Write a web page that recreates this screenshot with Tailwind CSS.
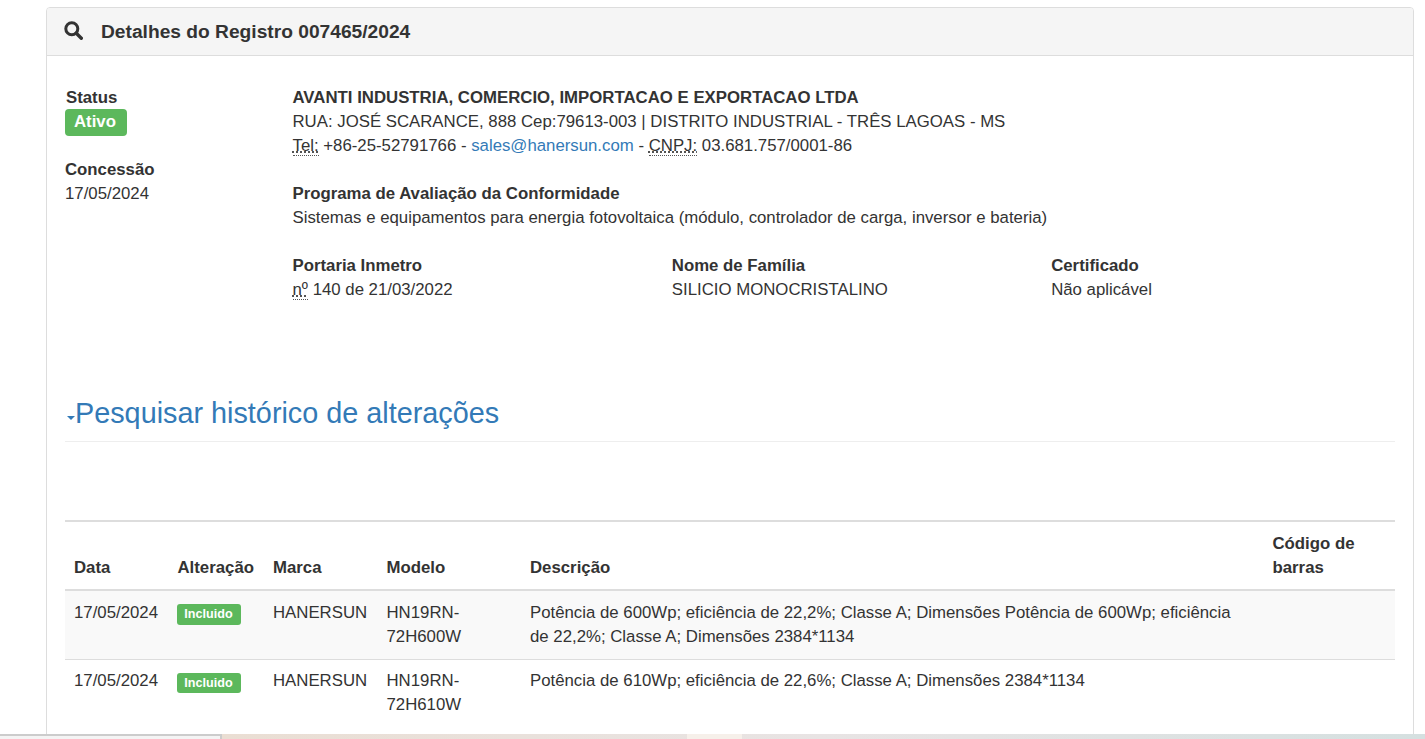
<!DOCTYPE html>
<html lang="pt-BR">
<head>
  <meta charset="UTF-8" />
  <script src="https://cdn.jsdelivr.net/npm/@tailwindcss/browser@4"></script>
  <title>Detalhes do Registro</title>
</head>
<body class="relative h-[739px] overflow-hidden bg-white font-['Liberation_Sans',Arial,sans-serif] text-[16.8px] leading-[24px] text-[#333]">
  <main class="ml-[46px] mt-[7px] w-[1368px] h-[760px] border border-[#ddd] rounded-[4px]">

    <!-- Panel heading -->
    <div class="flex items-center h-[48px] pl-[17px] bg-[#f5f5f5] border-b border-[#ddd] rounded-t-[3px]">
      <svg class="w-[19px] h-[19px] mr-[18px] -mt-[2px]" viewBox="0 0 19 19" fill="none" stroke="#333">
        <circle cx="7.8" cy="7.8" r="6" stroke-width="3" />
        <path d="M12.3 12.3L17.3 17.3" stroke-width="3.4" stroke-linecap="round" />
      </svg>
      <h3 class="text-[19.2px] font-bold leading-[20px] mt-px">Detalhes do Registro 007465/2024</h3>
    </div>

    <!-- Panel body -->
    <div class="pt-[30px] px-[18px]">
      <div class="flex">
        <div class="w-[227.5px] shrink-0">
          <div class="font-bold pl-px">Status</div>
          <span class="inline-block align-top -mt-px h-[27px] pl-[9px] pr-[11px] rounded-[4px] bg-[#5cb85c] text-white font-bold text-[16.8px] leading-[25px]">Ativo</span>
          <div class="font-bold mt-[22px]">Concessão</div>
          <div>17/05/2024</div>
        </div>
        <div class="flex-1">
          <div class="font-bold">AVANTI INDUSTRIA, COMERCIO, IMPORTACAO E EXPORTACAO LTDA</div>
          <div>RUA: JOSÉ SCARANCE, 888 Cep:79613-003 | DISTRITO INDUSTRIAL - TRÊS LAGOAS - MS</div>
          <div><abbr title="Telefone" class="underline border-b border-dotted border-[#555]">Tel:</abbr> +86-25-52791766 - <a class="text-[#337ab7]" href="#">sales@hanersun.com</a> - <abbr title="Cadastro" class="underline border-b border-dotted border-[#555]">CNPJ:</abbr> 03.681.757/0001-86</div>

          <div class="font-bold mt-[24px]">Programa de Avaliação da Conformidade</div>
          <div>Sistemas e equipamentos para energia fotovoltaica (módulo, controlador de carga, inversor e bateria)</div>

          <div class="grid grid-cols-3 w-[1138px] mt-[24px]">
            <div>
              <div class="font-bold">Portaria Inmetro</div>
              <div><abbr title="número" class="underline border-b border-dotted border-[#555]">nº</abbr> 140 de 21/03/2022</div>
            </div>
            <div>
              <div class="font-bold">Nome de Família</div>
              <div>SILICIO MONOCRISTALINO</div>
            </div>
            <div>
              <div class="font-bold">Certificado</div>
              <div>Não aplicável</div>
            </div>
          </div>
        </div>
      </div>

      <!-- Historico -->
      <div class="mt-[95px] pb-[11px] border-b border-[#eee] flex items-center h-[33px] box-content w-[1330px]">
        <span class="self-center mt-[8px] ml-[2px] w-0 h-0 border-x-[4px] border-x-transparent border-t-[4px] border-t-[#337ab7]"></span>
        <a href="#" class="text-[28.8px] leading-[33px] text-[#337ab7]">Pesquisar histórico de alterações</a>
      </div>

      <table class="table-fixed w-[1330px] mt-[78px] border-collapse border-t-2 border-[#ddd]">
        <colgroup>
          <col class="w-[104.5px]" />
          <col class="w-[95.5px]" />
          <col class="w-[113.5px]" />
          <col class="w-[143.5px]" />
          <col class="w-[742.5px]" />
          <col class="w-[130.5px]" />
        </colgroup>
        <thead>
          <tr class="border-b-2 border-[#ddd] font-bold">
            <th class="pt-[10px] pl-[9px] pr-2 pb-[9px] text-left align-bottom">Data</th>
            <th class="pt-[10px] px-2 pb-[9px] text-left align-bottom">Alteração</th>
            <th class="pt-[10px] px-2 pb-[9px] text-left align-bottom">Marca</th>
            <th class="pt-[10px] px-2 pb-[9px] text-left align-bottom">Modelo</th>
            <th class="pt-[10px] px-2 pb-[9px] text-left align-bottom">Descrição</th>
            <th class="pt-[10px] px-2 pb-[9px] text-left align-bottom">Código de barras</th>
          </tr>
        </thead>
        <tbody>
          <tr class="bg-[#f9f9f9] border-b border-[#ddd]">
            <td class="pt-[10px] pl-[9px] pr-2 pb-[10px] align-top">17/05/2024</td>
            <td class="pt-[13px] px-2 pb-[10px] align-top"><span class="block w-[64px] h-[21px] -ml-px rounded-[3px] bg-[#5cb85c] text-white font-bold text-[12.6px] leading-[21px] text-center">Incluido</span></td>
            <td class="pt-[10px] px-2 pb-[10px] align-top">HANERSUN</td>
            <td class="pt-[10px] px-2 pb-[10px] align-top">HN19RN-72H600W</td>
            <td class="pt-[10px] pl-2 pr-[30px] pb-[10px] align-top">Potência de 600Wp; eficiência de 22,2%; Classe A; Dimensões Potência de 600Wp; eficiência de 22,2%; Classe A; Dimensões 2384*1134</td>
            <td></td>
          </tr>
          <tr>
            <td class="pt-[9px] pl-[9px] pr-2 pb-2 align-top">17/05/2024</td>
            <td class="pt-[13px] px-2 pb-2 align-top"><span class="block w-[64px] h-[20px] -ml-px rounded-[3px] bg-[#5cb85c] text-white font-bold text-[12.6px] leading-[20px] text-center">Incluido</span></td>
            <td class="pt-[9px] px-2 pb-2 align-top">HANERSUN</td>
            <td class="pt-[9px] px-2 pb-2 align-top">HN19RN-72H610W</td>
            <td class="pt-[9px] px-2 pb-2 align-top">Potência de 610Wp; eficiência de 22,6%; Classe A; Dimensões 2384*1134</td>
            <td></td>
          </tr>
        </tbody>
      </table>
    </div>
  </main>

  <!-- Strip at the bottom of the window -->
  <div class="absolute left-0 right-0 bottom-0 h-[5px] flex">
    <div class="w-[222px] bg-[#f4f4f4] border-t-2 border-r-2 border-[#ccc]"></div>
    <div class="flex-1 relative bg-gradient-to-r from-[#eaded3] via-[#e8e4e4] to-[#d5e0e0]">
      <div class="absolute left-[465px] top-0 bottom-0 w-[55px] bg-[#f6f0ea]"></div>
    </div>
  </div>
</body>
</html>
